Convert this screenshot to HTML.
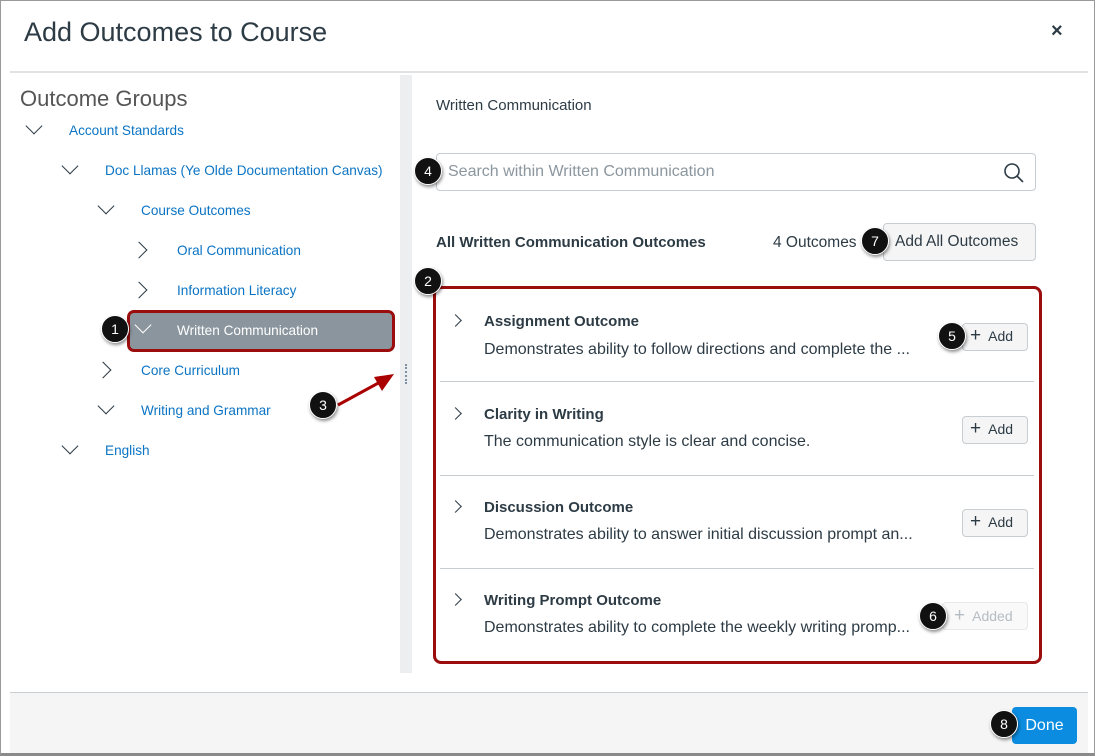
<!DOCTYPE html>
<html><head><style>
*{box-sizing:border-box;margin:0;padding:0}
body{width:1095px;height:756px;position:relative;background:#fff;font-family:"Liberation Sans",sans-serif;overflow:hidden;color:#2d3b45}
.a{position:absolute;white-space:nowrap}
.frame{position:absolute;left:0;top:0;width:1095px;height:756px;border:1px solid #9a9a9a;border-bottom:3px solid #8a8a8a}
.link{color:#0b74c4;font-size:13.6px}
.chev{position:absolute;width:12px;height:12px;border-right:1.6px solid #2d3b45;border-bottom:1.6px solid #2d3b45}
.down{transform:rotate(45deg)}
.right{transform:rotate(-45deg)}
.badge{position:absolute;width:28px;height:28px;border-radius:50%;background:#111;color:#fff;font-size:14px;text-align:center;line-height:26px;box-shadow:1px 2px 3px rgba(0,0,0,.45);border:1px solid #fff}
.btn{position:absolute;background:#f5f5f5;border:1px solid #c7cdd1;border-radius:4px;font-size:14px;color:#2d3b45}
.t{font-size:15px;font-weight:bold}
.d{font-size:16px}
</style></head><body>
<div class="frame"></div>
<div class="a" style="left:24px;top:17px;font-size:27px;color:#2d3b45">Add Outcomes to Course</div>
<div class="a" style="left:1051px;top:20px;font-size:20px;font-weight:bold">×</div>
<div class="a" style="left:10px;top:71px;width:1078px;height:2px;background:#dfe3e6"></div>

<div class="a" style="left:20px;top:86px;font-size:22px;color:#555">Outcome Groups</div>
<div class="chev down" style="left:28px;top:120px"></div><div class="a link" style="left:69px;top:123px">Account Standards</div>
<div class="chev down" style="left:64px;top:160px"></div><div class="a link" style="left:105px;top:163px">Doc Llamas (Ye Olde Documentation Canvas)</div>
<div class="chev down" style="left:100px;top:200px"></div><div class="a link" style="left:141px;top:203px">Course Outcomes</div>
<div class="chev right" style="left:133px;top:244px"></div><div class="a link" style="left:177px;top:243px">Oral Communication</div>
<div class="chev right" style="left:133px;top:284px"></div><div class="a link" style="left:177px;top:283px">Information Literacy</div>
<div class="a" style="left:127px;top:310px;width:268px;height:42px;background:#8b959e;border:3px solid #9b0d0d;border-radius:7px"></div>
<div class="chev down" style="left:137px;top:319px;border-color:#fff"></div><div class="a" style="left:177px;top:323px;font-size:13.6px;color:#fff">Written Communication</div>
<div class="chev right" style="left:97px;top:364px"></div><div class="a link" style="left:141px;top:363px">Core Curriculum</div>
<div class="chev down" style="left:100px;top:400px"></div><div class="a link" style="left:141px;top:403px">Writing and Grammar</div>
<div class="chev down" style="left:64px;top:440px"></div><div class="a link" style="left:105px;top:443px">English</div>

<div class="a" style="left:400px;top:75px;width:12px;height:598px;background:#eceeef"></div>
<div class="a" style="left:405px;top:364px;width:2px;height:20px;border-left:2px dotted #7d8fa3"></div>
<svg class="a" style="left:330px;top:365px" width="70" height="45"><line x1="8" y1="40" x2="52" y2="16" stroke="#a00" stroke-width="3"/><polygon points="64,9 44,12 52,26" fill="#a00"/></svg>
<div class="badge" style="left:101px;top:315px">1</div>
<div class="badge" style="left:309px;top:391px">3</div>

<div class="a" style="left:436px;top:97px;font-size:15px">Written Communication</div>
<div class="a" style="left:436px;top:153px;width:600px;height:38px;border:1px solid #c7cdd1;border-radius:4px"></div>
<div class="a" style="left:448px;top:163px;font-size:16px;color:#8b969e">Search within Written Communication</div>
<svg class="a" style="left:1003px;top:162px" width="22" height="22"><circle cx="9" cy="9" r="7" fill="none" stroke="#2d3b45" stroke-width="1.6"/><line x1="14" y1="14" x2="20" y2="20" stroke="#2d3b45" stroke-width="1.6"/></svg>
<div class="badge" style="left:414px;top:157px">4</div>

<div class="a" style="left:436px;top:234px;font-size:15px;font-weight:bold">All Written Communication Outcomes</div>
<div class="a" style="left:773px;top:234px;font-size:15.5px">4 Outcomes</div>
<div class="btn" style="left:883px;top:223px;width:153px;height:38px"></div>
<div class="a" style="left:895px;top:233px;font-size:15.5px">Add All Outcomes</div>
<div class="badge" style="left:861px;top:227px">7</div>

<div class="a" style="left:433px;top:286px;width:609px;height:378px;border:3px solid #9b0d0d;border-radius:8px"></div>
<div class="a" style="left:440px;top:381px;width:594px;height:1px;background:#c7cdd1"></div>
<div class="a" style="left:440px;top:475px;width:594px;height:1px;background:#c7cdd1"></div>
<div class="a" style="left:440px;top:568px;width:594px;height:1px;background:#c7cdd1"></div>
<div class="badge" style="left:414px;top:267px">2</div>

<div class="chev right" style="left:451px;top:316px;width:9px;height:9px;border-width:1.3px"></div>
<div class="a t" style="left:484px;top:313px">Assignment Outcome</div>
<div class="a d" style="left:484px;top:341px">Demonstrates ability to follow directions and complete the ...</div>
<div class="btn" style="left:962px;top:323px;width:66px;height:28px"></div><div class="a" style="left:970px;top:328px;font-size:14px"><span style="font-size:19px;line-height:14px">+</span>&nbsp; Add</div>
<div class="badge" style="left:938px;top:322px">5</div>

<div class="chev right" style="left:451px;top:409px;width:9px;height:9px;border-width:1.3px"></div>
<div class="a t" style="left:484px;top:406px">Clarity in Writing</div>
<div class="a d" style="left:484px;top:433px">The communication style is clear and concise.</div>
<div class="btn" style="left:962px;top:416px;width:66px;height:28px"></div><div class="a" style="left:970px;top:421px;font-size:14px"><span style="font-size:19px;line-height:14px">+</span>&nbsp; Add</div>

<div class="chev right" style="left:451px;top:502px;width:9px;height:9px;border-width:1.3px"></div>
<div class="a t" style="left:484px;top:499px">Discussion Outcome</div>
<div class="a d" style="left:484px;top:526px">Demonstrates ability to answer initial discussion prompt an...</div>
<div class="btn" style="left:962px;top:509px;width:66px;height:28px"></div><div class="a" style="left:970px;top:514px;font-size:14px"><span style="font-size:19px;line-height:14px">+</span>&nbsp; Add</div>

<div class="chev right" style="left:451px;top:595px;width:9px;height:9px;border-width:1.3px"></div>
<div class="a t" style="left:484px;top:592px">Writing Prompt Outcome</div>
<div class="a d" style="left:484px;top:619px">Demonstrates ability to complete the weekly writing promp...</div>
<div class="btn" style="left:942px;top:602px;width:86px;height:28px;border-color:#e6e8ea;background:#f9f9f9"></div><div class="a" style="left:954px;top:608px;font-size:14px;color:#b5bcc2"><span style="font-size:19px;line-height:14px">+</span>&nbsp; Added</div>
<div class="badge" style="left:919px;top:602px">6</div>

<div class="a" style="left:10px;top:692px;width:1078px;height:61px;background:#f5f5f5;border-top:1px solid #c7cdd1"></div>
<div class="a" style="left:1012px;top:707px;width:65px;height:37px;background:#0b8ce0;border-radius:4px;color:#fff;font-size:16px;text-align:center;line-height:37px">Done</div>
<div class="badge" style="left:990px;top:710px">8</div>
</body></html>
